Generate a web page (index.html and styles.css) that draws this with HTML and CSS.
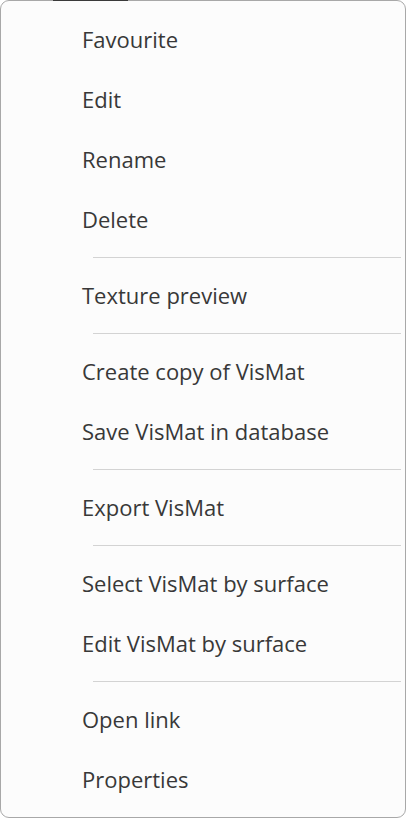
FILE: index.html
```html
<!DOCTYPE html>
<html>
<head>
<meta charset="utf-8">
<link rel="stylesheet" href="styles.css">
</head>
<body>
<div class="menu">
  <div class="item">Favourite</div>
  <div class="item">Edit</div>
  <div class="item">Rename</div>
  <div class="item">Delete</div>
  <div class="sep"></div>
  <div class="item">Texture preview</div>
  <div class="sep"></div>
  <div class="item">Create copy of VisMat</div>
  <div class="item">Save VisMat in database</div>
  <div class="sep"></div>
  <div class="item">Export VisMat</div>
  <div class="sep"></div>
  <div class="item">Select VisMat by surface</div>
  <div class="item">Edit VisMat by surface</div>
  <div class="sep"></div>
  <div class="item">Open link</div>
  <div class="item">Properties</div>
</div>
</body>
</html>
```
FILE: styles.css
```css
html, body {
  margin: 0;
  padding: 0;
  background: #ffffff;
}
.menu {
  position: relative;
  box-sizing: border-box;
  width: 406px;
  height: 818px;
  border: 1px solid #a8a8a8;
  border-radius: 9px;
  background: #fcfcfc;
  padding-top: 9px;
  display: flex;
  flex-direction: column;
  font-family: "Open Sans", "Noto Sans", sans-serif;
  color: #383838;
}
.menu::before {
  content: "";
  position: absolute;
  top: -1px;
  left: 52px;
  width: 75px;
  height: 1px;
  background: #3a3a3a;
}
.item {
  box-sizing: border-box;
  height: 60px;
  display: flex;
  align-items: center;
  padding-left: 81px;
  padding-bottom: 3px;
  font-size: 22px;
  line-height: 1;
}
.sep {
  box-sizing: border-box;
  height: 16px;
  padding: 7px 4px 0 92px;
}
.sep::after {
  content: "";
  display: block;
  height: 1px;
  background: #d3d3d3;
}
```
